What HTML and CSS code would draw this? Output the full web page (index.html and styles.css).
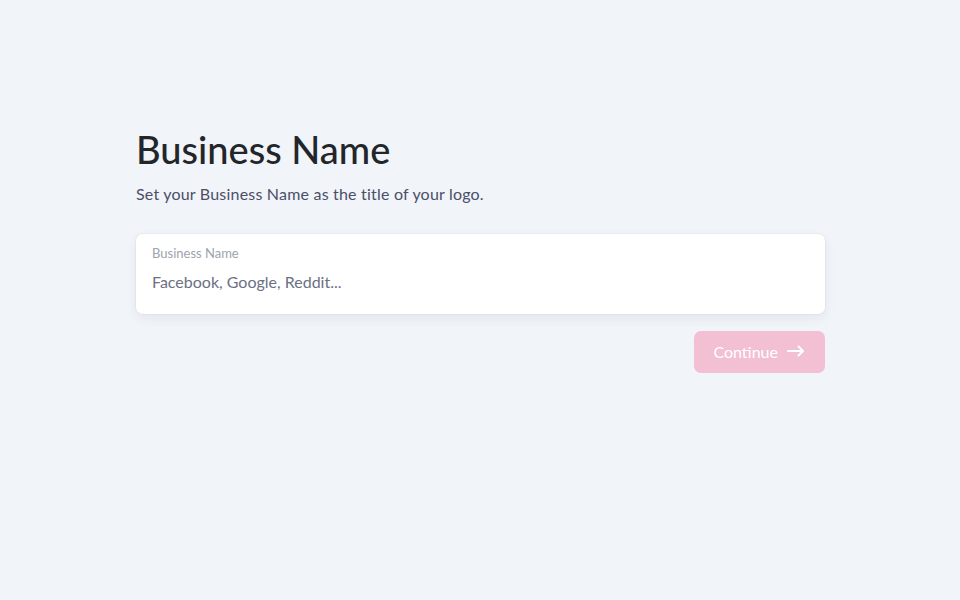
FILE: index.html
```html
<!DOCTYPE html>
<html lang="en">
<head>
    <meta charset="UTF-8">
    <meta name="viewport" content="width=device-width, initial-scale=1.0">
    <title>Business Name</title>
    <link rel="stylesheet" href="styles.css">
</head>
<body>
    <div class="step">
        <h1>Business Name</h1>
        <p class="lead">Set your Business Name as the title of your logo.</p>

        <label class="field">
            <span class="field-label">Business Name</span>
            <input type="text" id="business-name" placeholder="Facebook, Google, Reddit...">
        </label>

        <div class="actions">
            <button class="next" disabled>
                Continue
                <svg width="18" height="12" viewBox="0 0 18 12" fill="none" stroke="currentColor" stroke-width="2" stroke-linecap="round" stroke-linejoin="round">
                    <path d="M1 6h15M11.5 1.5L16 6l-4.5 4.5"/>
                </svg>
            </button>
        </div>
    </div>
</body>
</html>
```

FILE: styles.css
```css
body {
    margin: 0;
    min-height: 600px;
    background-color: #f1f4f8;
    font-family: Lato, "Open Sans", sans-serif;
    color: #212529;
}
.step {
    width: 689px;
    margin: 0 auto;
    padding-top: 126px;
    padding-left: 1px;
}
h1 {
    margin: 0;
    font-size: 38px;
    font-weight: 500;
    line-height: 46px;
    color: #22262b;
}
.lead {
    margin: 10px 0 0;
    font-size: 16px;
    line-height: 24px;
    letter-spacing: 0.2px;
    color: #4b4f68;
}
.field {
    display: flex;
    flex-direction: column;
    margin-top: 28px;
    padding: 10px 16px 21px;
    background-color: white;
    border-radius: 7px;
    box-shadow: 0 4px 12px rgba(30, 40, 70, 0.07), 0 0 0 1px rgba(30, 40, 70, 0.03);
}
.field-label {
    font-size: 13px;
    line-height: 18px;
    color: #9ea3ad;
}
.field input {
    margin-top: 9px;
    padding: 0;
    border: none;
    outline: none;
    font-family: inherit;
    font-size: 16px;
    line-height: 22px;
    color: #212529;
}
.field input::placeholder {
    color: #6b7084;
}
.actions {
    display: flex;
    justify-content: flex-end;
    margin-top: 17px;
}
.next {
    display: inline-flex;
    align-items: center;
    gap: 9px;
    height: 42px;
    padding: 0 20px 2px 19px;
    border: none;
    border-radius: 7px;
    background-color: #f3bfd3;
    color: white;
    font-family: inherit;
    font-size: 16px;
}
```
